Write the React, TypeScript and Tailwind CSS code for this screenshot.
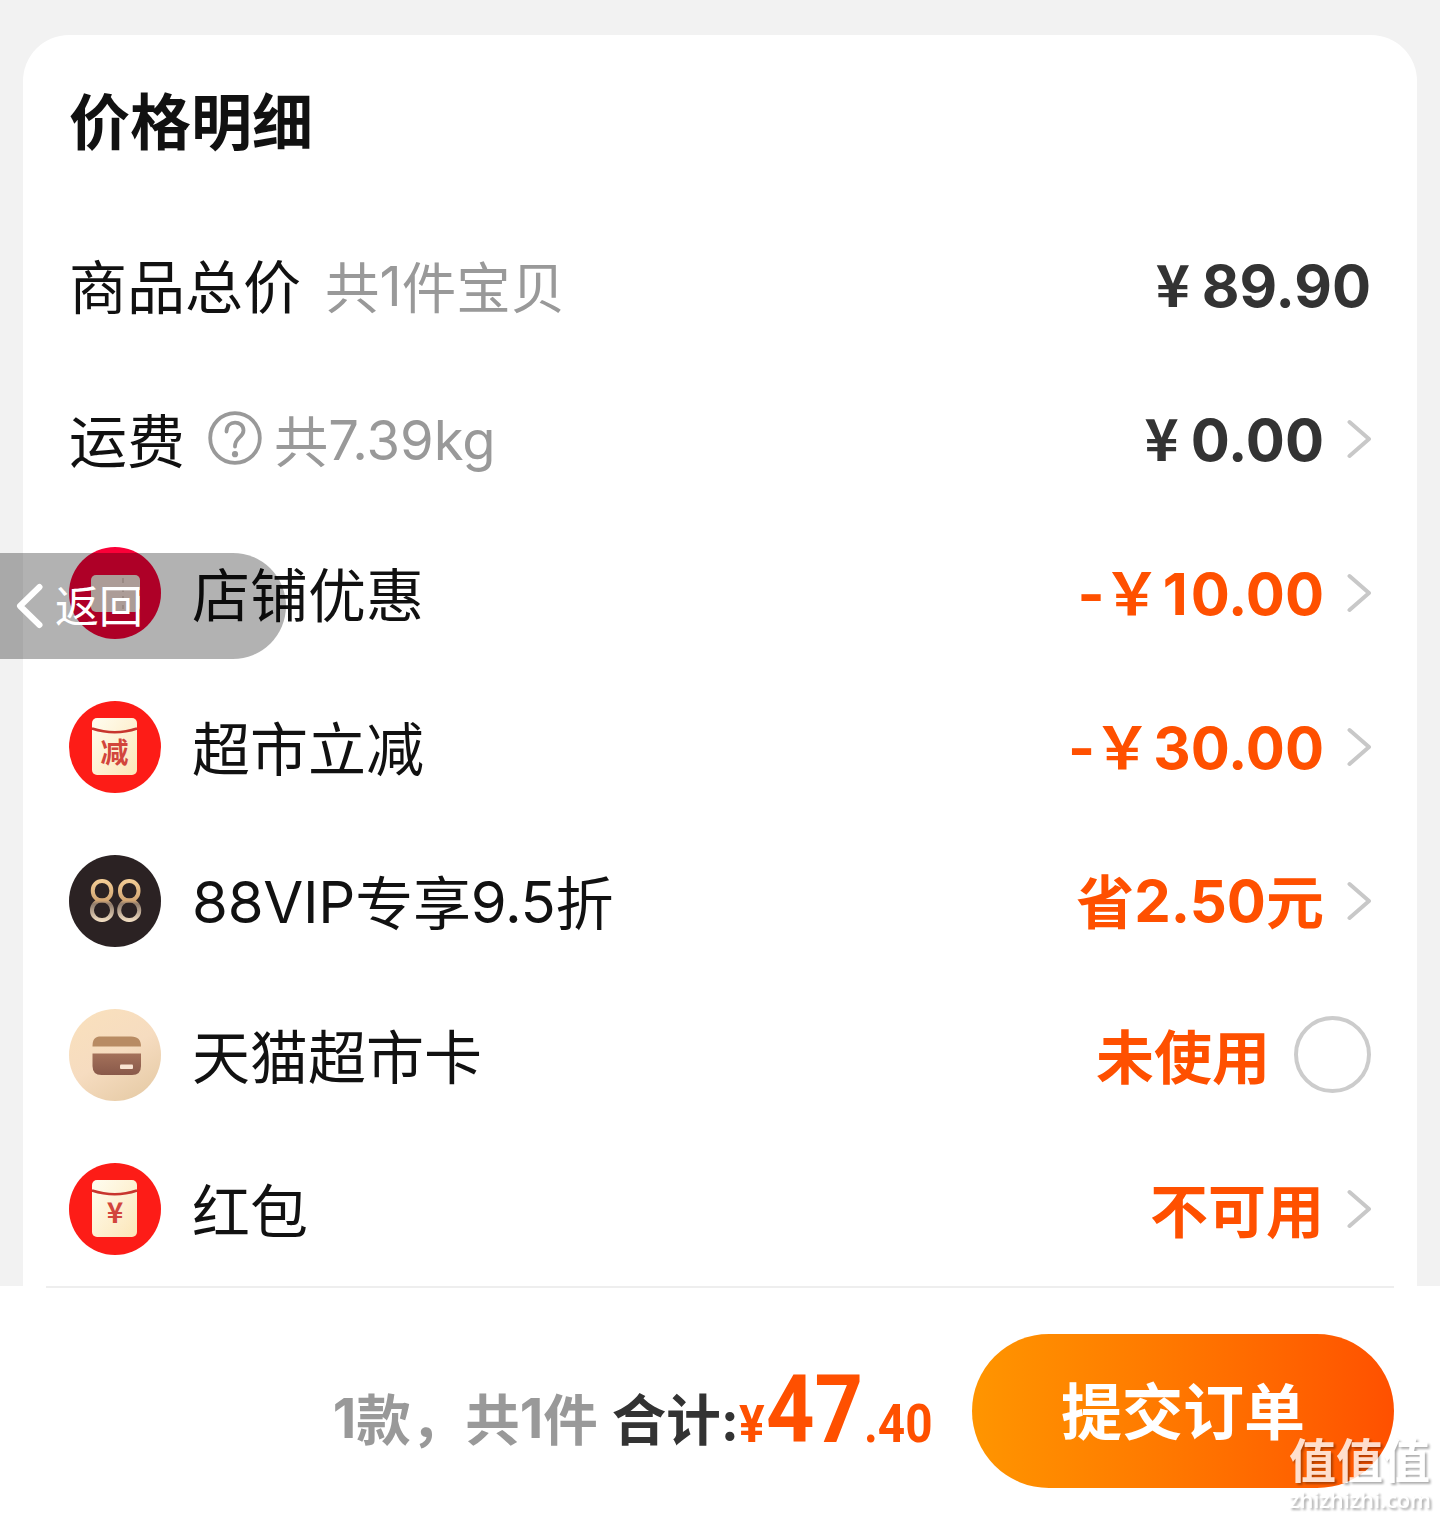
import React from "react";

const CJK = "font-['Inter','Noto_Sans_CJK_SC',sans-serif]";

function Chevron() {
  return (
    <svg className="ml-[22px] h-[40px] w-[25px] shrink-0" viewBox="0 0 25 40" fill="none">
      <path d="M3.5 3 L23 20 L3.5 37" stroke="#c8c8c8" strokeWidth="4" strokeLinecap="round" strokeLinejoin="round" />
    </svg>
  );
}

function HelpIcon() {
  return (
    <svg className="ml-[23px] h-[54px] w-[54px] shrink-0 -translate-y-px" viewBox="0 0 54 54" fill="none" stroke="#999" strokeWidth="3.8">
      <circle cx="27" cy="27" r="24.8" />
      <path d="M18.5 20.5 C18.5 8.5 35.5 9 35.5 19.5 C35.5 26.5 27 26 27 35.5" strokeLinecap="round" />
      <circle cx="27" cy="43.2" r="3.1" fill="#999" stroke="none" />
    </svg>
  );
}

function EnvelopeIcon({ children, small }: { children: string; small?: boolean }) {
  return (
    <svg className="h-[92px] w-[92px] shrink-0" viewBox="0 0 92 92">
      <defs>
        <linearGradient id="paper" x1="0" y1="0" x2="1" y2="1">
          <stop offset="0" stopColor="#fffdf0" />
          <stop offset="1" stopColor="#fce6b8" />
        </linearGradient>
      </defs>
      <circle cx="46" cy="46" r="46" fill="#fd1c17" />
      <rect x="23" y="17" width="45" height="57" rx="5" fill="url(#paper)" />
      <path d="M23 27.5 Q46 35 68 27.5" fill="none" stroke="#c8352e" strokeWidth="2.4" />
      <text
        x={small ? 46 : 45.5}
        y={small ? 60 : 61.5}
        textAnchor="middle"
        fontSize={small ? 28 : 28}
        fontWeight={small ? 700 : 700}
        fill="#d2453c"
        fontFamily="'Noto Sans CJK SC', sans-serif"
      >
        {children}
      </text>
    </svg>
  );
}

function ShopIcon() {
  return (
    <svg className="h-[92px] w-[92px] shrink-0" viewBox="0 0 92 92">
      <circle cx="46" cy="46" r="46" fill="#fa0038" />
      <rect x="22" y="28" width="49" height="37" rx="5" fill="#f6e0d8" />
      <path d="M54 31 V62" stroke="#dcc4bc" strokeWidth="2" strokeDasharray="5 4" />
      <path d="M71 43 A3 3 0 0 0 71 49 Z" fill="#e00032" />
    </svg>
  );
}

function VipIcon() {
  return (
    <svg className="h-[92px] w-[92px] shrink-0" viewBox="0 0 92 92" fill="none">
      <defs>
        <linearGradient id="gold" gradientUnits="userSpaceOnUse" x1="0" y1="24" x2="0" y2="67">
          <stop offset="0" stopColor="#f5cf97" />
          <stop offset="0.5" stopColor="#d3a673" />
          <stop offset="0.58" stopColor="#8f7b6b" />
          <stop offset="1" stopColor="#f6e2c6" />
        </linearGradient>
      </defs>
      <circle cx="46" cy="46" r="46" fill="#2b2223" />
      <g stroke="url(#gold)" strokeWidth="4">
        <rect x="23.8" y="26" width="18.5" height="19.5" rx="9.2" />
        <rect x="23" y="45.5" width="20" height="19.5" rx="9.6" />
        <rect x="51" y="26" width="18.5" height="19.5" rx="9.2" />
        <rect x="50.2" y="45.5" width="20" height="19.5" rx="9.6" />
      </g>
    </svg>
  );
}

function CardIcon() {
  return (
    <svg className="h-[92px] w-[92px] shrink-0" viewBox="0 0 92 92">
      <defs>
        <linearGradient id="cream" x1="0.2" y1="0" x2="0.8" y2="1">
          <stop offset="0" stopColor="#f9e0bd" />
          <stop offset="0.5" stopColor="#f6dcc0" />
          <stop offset="1" stopColor="#e6cba6" />
        </linearGradient>
        <linearGradient id="brown" x1="0" y1="0" x2="0" y2="1">
          <stop offset="0" stopColor="#a4715a" />
          <stop offset="1" stopColor="#89594a" />
        </linearGradient>
      </defs>
      <circle cx="46" cy="46" r="46" fill="url(#cream)" />
      <path d="M23.5 37.5 C23.5 30 26 27.5 32 27.5 H62 C69 27.5 72 31 72 37.5 Z" fill="#b88b63" />
      <path d="M23.5 44.5 H72 V57 Q72 66 63 66 H32.5 Q23.5 66 23.5 57 Z" fill="url(#brown)" />
      <rect x="51" y="55.5" width="13" height="4.5" rx="1" fill="#f9e4d2" />
    </svg>
  );
}

/* Latin characters sit slightly above the CJK baseline. */
function Latin({ children }: { children: string }) {
  return <span className="inline-block -translate-y-[2px]">{children}</span>;
}

type RowProps = { icon?: React.ReactNode; label: React.ReactNode; extra?: React.ReactNode; children: React.ReactNode };

function Row({ icon, label, extra, children }: RowProps) {
  return (
    <div className="flex h-[154px] items-center justify-between">
      <div className="flex items-center">
        {icon}
        <span className={`${icon ? "ml-[31px]" : ""} pt-[5px] text-[58px] leading-[80px] whitespace-nowrap text-[#111]`}>{label}</span>
        {extra}
      </div>
      <div className="flex items-center text-[58px] leading-[80px] font-semibold whitespace-nowrap text-[#ff5000]">{children}</div>
    </div>
  );
}

function Discount({ amount }: { amount: string }) {
  return (
    <span className="flex pt-[2px] font-[650]">
      <span>-</span>
      <span className="w-[58px] -translate-x-[2px] -translate-y-[4px] text-center font-['Noto_Sans_CJK_SC',sans-serif] font-bold">￥</span>
      <span className={amount.startsWith("1") ? "first-letter:tracking-[3px]" : ""}>{amount}</span>
    </span>
  );
}

function Price({ amount }: { amount: string }) {
  return (
    <span className="flex gap-[12px] pt-[2px] font-[650] text-[#333]">
      <span className="-translate-y-[4px] font-['Noto_Sans_CJK_SC',sans-serif] font-bold">¥</span>
      <span>{amount}</span>
    </span>
  );
}

export default function App() {
  return (
    <div className={`relative flex h-[1517px] w-[1440px] flex-col overflow-hidden bg-[#f2f2f2] ${CJK}`}>
      <main className="mx-[23px] mt-[35px] h-[1251px] overflow-hidden rounded-t-[46px] bg-white px-[46px]">
        <h1 className="flex h-[173px] items-center pt-[3px] text-[61px] leading-[88px] font-bold text-[#111]">价格明细</h1>
        <Row
          label="商品总价"
          extra={
            <span className="ml-[24px] pt-[5px] text-[54.5px] leading-[80px] text-[#999]">
              共<Latin>1</Latin>件宝贝
            </span>
          }
        >
          <Price amount="89.90" />
        </Row>
        <Row
          label="运费"
          extra={
            <>
              <HelpIcon />
              <span className="ml-[12px] pt-[5px] text-[54.3px] leading-[80px] text-[#999]">
                共<Latin>7.39kg</Latin>
              </span>
            </>
          }
        >
          <Price amount="0.00" />
          <Chevron />
        </Row>
        <Row icon={<ShopIcon />} label="店铺优惠">
          <Discount amount="10.00" />
          <Chevron />
        </Row>
        <Row icon={<EnvelopeIcon>减</EnvelopeIcon>} label="超市立减">
          <Discount amount="30.00" />
          <Chevron />
        </Row>
        <Row
          icon={<VipIcon />}
          label={
            <span className="tracking-[-0.25px]">
              <Latin>88VIP</Latin>专享<Latin>9.5</Latin>折
            </span>
          }
        >
          <span className="pt-[4px] font-[650]">
            省<Latin>2.50</Latin>元
          </span>
          <Chevron />
        </Row>
        <Row icon={<CardIcon />} label="天猫超市卡">
          <span className="pt-[5px] font-bold">未使用</span>
          <span className="ml-[24px] h-[77px] w-[77px] -translate-y-px rounded-full border-4 border-[#ccc]" />
        </Row>
        <Row icon={<EnvelopeIcon small>¥</EnvelopeIcon>} label="红包">
          <span className="pt-[5px] font-bold">不可用</span>
          <Chevron />
        </Row>
      </main>

      <footer className="flex h-[231px] flex-col bg-white px-[46px]">
        <div className="h-[2px] shrink-0 bg-[#eee]" />
        <div className="mt-[46px] flex h-[154px] items-center justify-end">
          <div className="flex items-baseline pt-[2px] whitespace-nowrap">
            <span className="text-[54.5px] font-bold text-[#999]">
              <Latin>1</Latin>款，共<Latin>1</Latin>件
            </span>
            <span className="ml-[14px] text-[54.5px] font-bold text-[#333]">合计:</span>
            <span className="flex w-[194px] translate-y-[2px] items-baseline font-[Roboto] font-bold text-[#ff5000]">
              <span className="w-[27px] origin-left scale-x-92 text-[52px]">¥</span>
              <span className="w-[98px] origin-left scale-x-90 text-[94px] leading-none">47</span>
              <span className="origin-left scale-x-90 text-[53px]">.40</span>
            </span>
          </div>
          <button className="ml-[39px] h-[154px] w-[422px] shrink-0 rounded-full bg-linear-to-r from-[#ff9500] to-[#ff5000] pt-[3px] text-[61px] leading-[88px] font-bold text-white">
            提交订单
          </button>
        </div>
      </footer>

      <div className="absolute top-[553px] left-0 flex h-[106px] w-[286px] items-center rounded-r-full bg-black/30 text-white">
        <svg className="ml-[15px] h-[46px] w-[28px]" viewBox="0 0 28 46" fill="none">
          <path d="M24.5 4 L5 23 L24.5 42" stroke="#fff" strokeWidth="6" strokeLinecap="round" strokeLinejoin="round" />
        </svg>
        <span className="ml-[12px] pt-[2px] text-[44px] leading-[60px]">返回</span>
      </div>

      <div className="absolute top-[1435px] left-[1289px] w-[146px] text-white opacity-80 drop-shadow-[2px_2px_1px_rgba(0,0,0,0.4)]">
        <div className="text-[47px] leading-[52px] font-bold">值值值</div>
        <div className="font-['Open_Sans'] text-[22px] leading-[24px] font-semibold tracking-[-0.1px]">zhizhizhi.com</div>
      </div>
    </div>
  );
}
